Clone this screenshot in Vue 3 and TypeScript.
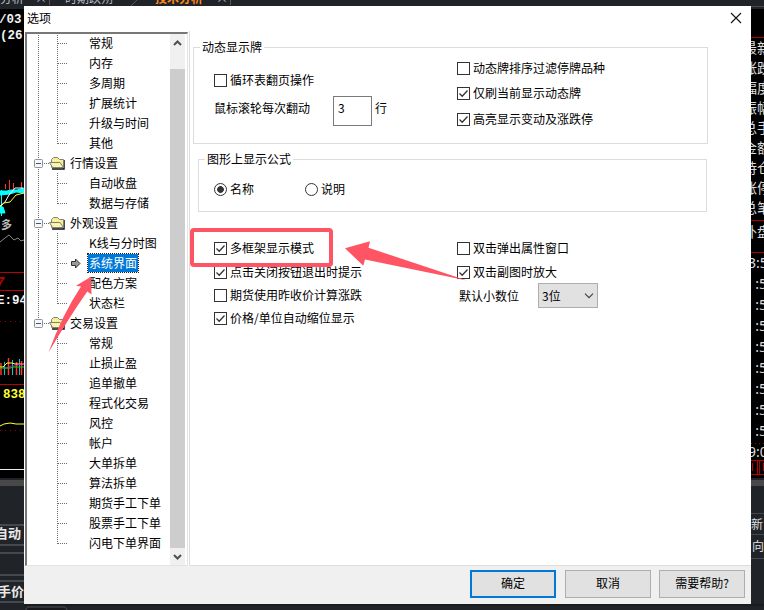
<script setup lang="ts">
interface TreeRow {
  text: string
  kind: 'branch' | 'leaf'
  last?: boolean
  selected?: boolean
  root?: boolean
}

const leaf = (text: string, extra: Partial<TreeRow> = {}): TreeRow => ({ text, kind: 'leaf', root: true, ...extra })

const rows: TreeRow[] = [
  leaf('常规'),
  leaf('内存'),
  leaf('多周期'),
  leaf('扩展统计'),
  leaf('升级与时间'),
  leaf('其他', { last: true }),
  { text: '行情设置', kind: 'branch', root: true },
  leaf('自动收盘'),
  leaf('数据与存储', { last: true }),
  { text: '外观设置', kind: 'branch', root: true },
  leaf('K线与分时图'),
  leaf('系统界面', { selected: true }),
  leaf('配色方案'),
  leaf('状态栏', { last: true }),
  { text: '交易设置', kind: 'branch', root: false },
  ...['常规', '止损止盈', '追单撤单', '程式化交易', '风控', '帐户', '大单拆单', '算法拆单', '期货手工下单', '股票手工下单'].map((t) =>
    leaf(t, { root: false }),
  ),
  leaf('闪电下单界面', { root: false, last: true }),
]

interface Check {
  text: string
  on: boolean
}

const boardChecks: Check[] = [
  { text: '动态牌排序过滤停牌品种', on: false },
  { text: '仅刷当前显示动态牌', on: true },
  { text: '高亮显示变动及涨跌停', on: true },
]
const leftChecks: Check[] = [
  { text: '多框架显示模式', on: true },
  { text: '点击关闭按钮退出时提示', on: true },
  { text: '期货使用昨收价计算涨跌', on: false },
  { text: '价格/单位自动缩位显示', on: true },
]
const rightChecks: Check[] = [
  { text: '双击弹出属性窗口', on: false },
  { text: '双击副图时放大', on: true },
]
const quoteLabels = ['最新', '涨跌', '幅度', '振幅', '总手', '金额', '持仓', '涨停', '总笔']
const tickTimes = [268, 289, 310, 331, 352, 373, 394, 415, 436]
</script>

<template>
  <div class="screen">
    <svg class="backdrop" width="764" height="610" viewBox="0 0 764 610">
      <rect width="764" height="610" fill="#202429" />
      <g font-size="12" fill="#b8bcc0">
        <text x="0" y="3">分析</text>
        <text x="65" y="3">时期跌朔</text>
        <text x="155" y="3" fill="#ff8a1c" font-weight="bold">技术分析</text>
        <text x="35" y="3">×</text>
        <text x="216" y="3">×</text>
      </g>
      <path d="M49.500 0v5M230.500 0v5M137 0l-6 6" stroke="#53575b" fill="none" />

      <rect y="9" width="24" height="469" fill="#000" />
      <g class="fixed" font-size="12.500" fill="#f4f4f4" font-weight="bold">
        <text x="-1" y="23">/03</text>
        <text x="0" y="39">(26</text>
        <text x="-3" y="304">E:94</text>
        <text x="3" y="398" fill="#ffff30">838</text>
      </g>
      <path d="M9.500 180v10M5.500 184v5M13.500 183v6M21.500 182v6M1.500 190v17" stroke="#f33" />
      <path d="M0 191h7l4-1h6l7-2v5l-8-1-6 2-10 1zM0 207l3 0 2 6h-5z" fill="#0ff" stroke="#0ff" />
      <path d="M1.500 190v26" stroke="#0ff" />
      <path d="M0 206l5-4 4-7 6-7h8" stroke="#fff" fill="none" />
      <path d="M0 207l4-4 6-1 6-7 8-2" stroke="#ff3" fill="none" />
      <text x="1" y="229" font-size="11" font-weight="bold" fill="#bbb">多</text>
      <path d="M0 242l5-4 4-3 5 5 4-2 3 3 3-1" stroke="#888" fill="none" />
      <path d="M0 272.500h24M0 290.500h24M0 384.500h24" stroke="#b00" />
      <text class="fixed" x="-4" y="287" font-size="14" font-style="italic" font-weight="bold" fill="#b00">7</text>
      <path d="M0 321.500h24M0 430.500h24" stroke="#900" stroke-dasharray="1 4" />
      <path d="M1 363v12M8.500 358v17M16.500 362v13M21.500 361v14" stroke="#f33" stroke-width="1.500" />
      <path d="M4.500 362v13M12.500 360v15M19.500 359v16" stroke="#0cc" />
      <path d="M0 367h3l4-4h5l3 1h9" stroke="#ff3" fill="none" />
      <path d="M3 368h4l4-2h5l4-2h4" stroke="#d0d" fill="none" />
      <path d="M0 368h10l4-1h10" stroke="#0d0" fill="none" />
      <path d="M0 426l4-2 6-1 6 1 4 0 4 0" stroke="#ff3" fill="none" />
      <path d="M0 469.500h24" stroke="#eee" />
      <rect y="480" width="24" height="6" fill="#484848" />
      <path d="M0 525h24M0 545h24M0 553h24M0 575h24M0 581h24M0 602h24" stroke="#45484c" stroke-width="2" />
      <g font-size="13" fill="#e8e8e8" font-weight="bold">
        <text x="-5" y="538">自动</text>
        <text x="-2" y="596">手价</text>
      </g>
      <path d="M26 610v-1l2-2h37l2 3" stroke="#484c50" fill="#17191c" />

      <rect x="751" y="9" width="13" height="469" fill="#000" />
      <path d="M751 6.500h13" stroke="#484848" />
      <path d="M751 37.500h13M751 220.500h13M751 252.500h13" stroke="#a00" />
      <g font-size="14" fill="#ddd">
        <text v-for="(q, i) in quoteLabels" :key="q" x="743" :y="53 + i * 20">{{ q }}</text>
        <text x="743" y="237">外盘</text>
      </g>
      <g class="latin" font-size="14" fill="#ddd">
        <text v-for="(y, i) in tickTimes" :key="y" x="748" :y="y">{{ i === 0 ? '3:5' : '\u00a0\u00a0:5' }}</text>
        <text x="748" y="457">9:0</text>
      </g>
      <path d="M751 443.500h13" stroke="#900" stroke-dasharray="1 3" />
      <path d="M751 460.500h13M751 474.500h13M757.500 460v14M759.500 460v14M752.500 463v8M763.500 463v8" stroke="#b00" fill="none" />
      <rect x="751" y="480" width="13" height="6" fill="#484848" />
      <path d="M751 513.500h13M751 534.500h13M751 558.500h13" stroke="#45484c" />
      <g font-size="12" fill="#ddd">
        <text x="751" y="529">新</text>
        <text x="752" y="551">向</text>
      </g>
      <rect x="24" y="604" width="740" height="2" fill="#191b1e" />
    </svg>

    <section class="dialog">
      <header class="titlebar">
        <span>选项</span>
        <svg width="12" height="12" viewBox="0 0 12 12"><path d="M1 1l10 10M11 1L1 11" stroke="#111" stroke-width="1.100" /></svg>
      </header>

      <div class="body">
        <aside class="tree">
          <ul class="rows">
            <li v-for="(r, i) in rows" :key="i" class="row">
              <svg class="lines" width="60" height="20" viewBox="0 0 60 20">
                <g stroke="#6d6d6d" stroke-dasharray="1 1" fill="none">
                  <path v-if="r.root || r.kind === 'branch'" :d="r.root ? 'M10.500 0V20' : 'M10.500 0V10'" />
                  <path v-if="r.kind === 'leaf'" :d="r.last ? 'M29.500 0V11' : 'M29.500 0V20'" />
                  <path v-if="r.kind === 'leaf'" d="M30 10.500H40" />
                  <path v-else d="M16 10.500H21" />
                </g>
                <template v-if="r.kind === 'branch'">
                  <rect x="6.500" y="6.500" width="8" height="8" rx="1" fill="#f7f7f7" stroke="#919191" />
                  <path d="M8 10.500h5" stroke="#3556a7" />
                  <path d="M24 16h12V7" stroke="#111" stroke-width="1.500" fill="none" />
                  <path d="M23.500 14.500V6.500l2-2h4l2 2h4v8z" fill="#f4ee8c" stroke="#808080" />
                  <path d="M24.500 14.500l-3-5h10.500l3.500 5z" fill="#fbf48a" stroke="#808080" />
                  <path d="M25 11.500h7M26 13.500h7M25 7.500h8" stroke="#fff" stroke-dasharray="1 1" />
                </template>
                <path v-if="r.selected" d="M43.500 8.500h4V6l4.500 4.500-4.500 4.500v-2.500h-4z" fill="#999" stroke="#333" />
              </svg>
              <span :class="['label', r.kind, { selected: r.selected }]">{{ r.text }}</span>
            </li>
          </ul>
          <div class="scrollbar">
            <div class="arrow up"><svg width="9" height="6"><path d="M1 5l3.500-3.500L8 5" /></svg></div>
            <div class="thumb"></div>
            <div class="arrow down"><svg width="9" height="6"><path d="M1 1l3.500 3.500L8 1" /></svg></div>
          </div>
        </aside>

        <main class="page">
          <section class="group board">
            <div class="legend">动态显示牌</div>
            <div class="board-grid">
              <div class="board-left">
                <label class="check"><i class="box"></i>循环表翻页操作</label>
                <div class="wheel">
                  <span>鼠标滚轮每次翻动</span>
                  <span class="field">3</span>
                  <span>行</span>
                </div>
              </div>
              <div class="board-right">
                <label v-for="c in boardChecks" :key="c.text" class="check">
                  <i class="box"><svg v-if="c.on" width="11" height="11"><path d="M1.500 5.500l2.700 2.700 5.300-5.700" /></svg></i>{{ c.text }}
                </label>
              </div>
            </div>
          </section>

          <section class="group formula">
            <div class="legend">图形上显示公式</div>
            <div class="radios">
              <label class="check"><i class="radio on"></i>名称</label>
              <label class="check"><i class="radio"></i>说明</label>
            </div>
          </section>

          <div class="options">
            <div class="options-col">
              <label v-for="c in leftChecks" :key="c.text" class="check">
                <i class="box"><svg v-if="c.on" width="11" height="11"><path d="M1.500 5.500l2.700 2.700 5.300-5.700" /></svg></i>{{ c.text }}
              </label>
            </div>
            <div class="options-col">
              <label v-for="c in rightChecks" :key="c.text" class="check">
                <i class="box"><svg v-if="c.on" width="11" height="11"><path d="M1.500 5.500l2.700 2.700 5.300-5.700" /></svg></i>{{ c.text }}
              </label>
              <div class="decimals">
                <span>默认小数位</span>
                <span class="select">3位<svg width="10" height="6"><path d="M1 0.700l4 4 4-4" /></svg></span>
              </div>
            </div>
          </div>
        </main>
      </div>

      <footer class="footer">
        <button class="btn primary">确定</button>
        <button class="btn">取消</button>
        <button class="btn">需要帮助?</button>
      </footer>
    </section>

    <svg class="marks" width="764" height="610" viewBox="0 0 764 610">
      <rect x="192" y="230" width="139" height="35" rx="2" fill="none" stroke="#ff5464" stroke-width="4" />
      <path d="M345 248.300L370 241.300L368.500 247.700L467 280.600L365 259.500L363.300 265.700Z" fill="#ff5464" />
      <path d="M91 276.700L76 285.700L81 286.500Q62 315 48.500 352.500Q70 316 87.300 291.500L91.500 294.500Z" fill="#ff5464" />
    </svg>
  </div>
</template>

<style>
body {
  margin: 0;
  overflow: hidden;
}
</style>

<style scoped>
.screen {
  position: relative;
  width: 764px;
  height: 610px;
  box-sizing: border-box;
  padding: 6px 13px 6px 24px;
  overflow: hidden;
  font: 12px/16px 'Noto Sans CJK SC', sans-serif;
  color: #000;
}
.backdrop,
.marks {
  position: absolute;
  left: 0;
  top: 0;
}
.marks {
  pointer-events: none;
}
.fixed {
  font-family: 'Liberation Mono', monospace;
}
.latin {
  font-family: 'Noto Sans', sans-serif;
}
.dialog {
  position: relative;
  display: flex;
  flex-direction: column;
  width: 727px;
  height: 598px;
  background: #f0f0f0;
}
.titlebar {
  display: flex;
  align-items: center;
  justify-content: space-between;
  box-sizing: border-box;
  height: 25px;
  padding: 0 9px 2px 3px;
  background: #fff;
}
.body {
  display: flex;
  height: 535px;
  background: #fff;
}
.tree {
  display: flex;
  box-sizing: border-box;
  width: 163px;
  margin-left: 1px;
  margin-top: 1px;
  border: 1px solid #e3e3e3;
  border-left: 2px solid #777;
  border-top: 2px solid #777;
}
.rows {
  flex: 1;
  min-width: 0;
  margin: -1px 0 0 1px;
  padding: 0;
  list-style: none;
}
.row {
  display: flex;
  align-items: center;
  height: 20px;
  white-space: nowrap;
}
.lines {
  flex: none;
}
.label {
  height: 18px;
  line-height: 18px;
}
.label.leaf {
  padding: 0 1px;
}
.label.branch {
  margin-left: -18px;
}
.label.selected {
  color: #fff;
  background: #0078d7;
  outline: 1px dotted #222;
}
.scrollbar {
  display: flex;
  flex-direction: column;
  width: 15px;
  margin-right: 2px;
  background: #f0f0f0;
}
.arrow {
  display: flex;
  align-items: center;
  justify-content: center;
  height: 17px;
}
.arrow.up {
  height: 18px;
  margin-bottom: 17px;
}
.arrow path {
  fill: none;
  stroke: #505050;
  stroke-width: 2;
}
.thumb {
  flex: 1;
  background: #cdcdcd;
}
.page {
  flex: 1;
  box-sizing: border-box;
  margin-left: 1px;
  padding: 16px 0 0 3px;
  border-left: 1px solid #dcdcdc;
  border-bottom: 1px solid #dcdcdc;
}
.group {
  box-sizing: border-box;
  border: 1px solid #dcdcdc;
}
.board {
  width: 515px;
  height: 97px;
}
.formula {
  width: 509px;
  height: 53px;
  margin: 15px 0 0 5px;
}
.legend {
  width: max-content;
  height: 16px;
  margin: -9px 0 0 6px;
  padding: 0 2px;
  background: #fff;
}
.board-grid {
  display: grid;
  grid-template-columns: 243px 1fr;
  padding-left: 20px;
}
.board-left {
  padding-top: 17px;
}
.check {
  display: flex;
  align-items: center;
  gap: 3px;
  height: 16px;
  white-space: nowrap;
}
.box,
.radio {
  display: block;
  flex: none;
  box-sizing: border-box;
  width: 13px;
  height: 13px;
  border: 1px solid #333;
  background: #fff;
}
.box svg {
  display: block;
}
.box path {
  fill: none;
  stroke: #333;
  stroke-width: 1.3;
}
.radio {
  border-radius: 50%;
}
.radio.on {
  background: radial-gradient(circle, #333 0 3px, #fff 3.700px);
}
.wheel {
  display: flex;
  align-items: center;
  height: 30px;
  margin-top: 8px;
}
.wheel > span:first-child {
  width: 119px;
  margin-top: -6px;
}
.wheel > span:last-child {
  margin: -6px 0 0 3px;
}
.field {
  box-sizing: border-box;
  width: 39px;
  height: 30px;
  padding: 3px 4px;
  border: 1px solid #7a7a7a;
}
.board-right {
  display: grid;
  grid-template-rows: 25px 26px 16px;
  padding-top: 5px;
}
.radios {
  display: grid;
  grid-template-columns: 91px 1fr;
  padding: 14px 0 0 15px;
}
.options {
  display: grid;
  grid-template-columns: 243px 1fr;
  padding: 28px 0 0 21px;
}
.options-col {
  display: grid;
  grid-template-rows: 24px 23px 23px 16px;
}
.decimals {
  display: flex;
  align-items: center;
  height: 25px;
  margin-top: -4px;
  padding-left: 2px;
}
.decimals > span:first-child {
  width: 79px;
}
.select {
  display: flex;
  align-items: center;
  justify-content: space-between;
  box-sizing: border-box;
  width: 60px;
  height: 25px;
  padding: 0 3px;
  border: 1px solid #adadad;
  background: #e1e1e1;
}
.select path {
  fill: none;
  stroke: #444;
  stroke-width: 1.2;
}
.footer {
  display: flex;
  justify-content: flex-end;
  gap: 8px;
  padding: 4px 6px 0 0;
}
.btn {
  box-sizing: border-box;
  width: 86px;
  height: 28px;
  padding: 0 0 2px;
  border: 1px solid #adadad;
  background: #e1e1e1;
  color: #000;
  font: inherit;
}
.btn.primary {
  margin-right: 1px;
  border: 2px solid #0078d7;
}
</style>
